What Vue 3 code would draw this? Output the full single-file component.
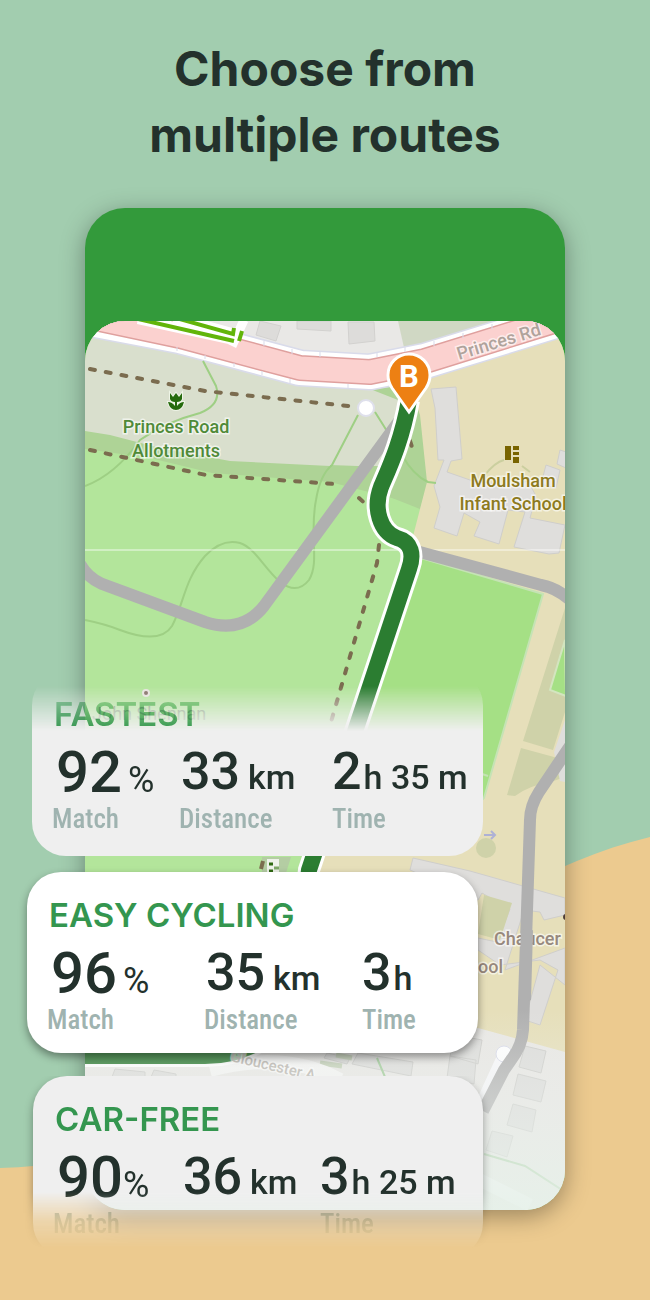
<script setup>
const routes = [
  {
    name: 'FASTEST',
    kind: 'fastest',
    match: '92',
    distance: '33',
    time: ['2', 'h 35 m'],
  },
  {
    name: 'EASY CYCLING',
    kind: 'easy',
    match: '96',
    distance: '35',
    time: ['3', 'h'],
  },
  {
    name: 'CAR-FREE',
    kind: 'carfree',
    match: '90',
    distance: '36',
    time: ['3', 'h 25 m'],
  },
]

const routeLine =
  'M409 400 C402 440 390 466 381 487 C373 508 380 532 397 538 C412 542 414 555 409 569 L309 870 L292 1010 Q260 1056 205 1056 L80 1056'
</script>

<template>
  <main class="poster">
    <svg class="dune" viewBox="0 0 650 1300" preserveAspectRatio="none" aria-hidden="true">
      <path d="M0 1168 C130 1164 220 1120 330 1025 C430 940 530 866 650 837 V1300 H0 Z" fill="#ecca8f" />
    </svg>

    <h1>Choose from<br />multiple routes</h1>

    <div class="stage">
      <section class="phone" aria-label="Map">
        <svg class="map" viewBox="85 321 480 889">
          <defs>
            <linearGradient id="haze" x1="0" y1="0" x2="0" y2="1">
              <stop offset="0" stop-color="#ecefec" stop-opacity="0" />
              <stop offset="0.4" stop-color="#ebefec" stop-opacity="0.4" />
              <stop offset="1" stop-color="#e6f1e9" stop-opacity="0.9" />
            </linearGradient>
          </defs>
          <rect x="85" y="321" width="480" height="889" fill="#b3e59b" />

          <!-- land cover -->
          <path d="M85 321 H565 V400 L400 500 L330 482 L212 473 L150 458 L85 449 Z" fill="#aed396" />
          <path d="M85 321 H430 L400 380 L398 466 H330 L230 461 L160 448 L110 435 L85 431 Z" fill="#d9dfcd" />
          <path d="M396 386 L417 410 L428 482 L420 509 L362 486 L330 482 V465 L385 467 L400 420 Z" fill="#aed396" />
          <path d="M370 389 L392 387 L398 400 Z" fill="#aed396" />
          <path d="M408 380 L565 335 V1210 H300 V870 L412 540 L427 482 L420 415 Z" fill="#e6dfba" />
          <path d="M414 556 L543 594 L484 798 L440 840 L320 850 Z" fill="#a5e085" stroke="#c5e3b5" stroke-width="2" />
          <path d="M482 774 L488 776" stroke="#c5e3b5" stroke-width="2" />
          <path d="M565 608 L523 741 L553 750 L565 712 Z M521 748 L507 795 L515 796 Q530 785 548 783 L562 778 L565 760 Z" fill="#cfd2a9" />
          <path d="M565 640 L550 690 L566 696 Z" fill="#a5e085" stroke="#d3e5bf" stroke-width="2" />
          <path d="M565 720 L554 752 L560 781 L565 782 Z" fill="#dfdedc" />
          <circle cx="486" cy="848" r="10" fill="#cfd2a9" />
          <path d="M262 857 H291 L286 873 H262 Z" fill="#b4cda3" />

          <!-- north side of the road -->
          <path d="M85 321 H565 L425 348 L370 356 L300 352 L237 336 L160 321 Z" fill="#e9e8e6" />
          <path d="M398 321 H540 L405 352 Z" fill="#d0d8c4" />
          <path d="M260 321 L281 326 L276 341 L256 335 Z M297 321 H331 V331 L297 329 Z M348 322 H374 L375 341 L349 344 Z" fill="#dddcda" stroke="#d2d1cf" />
          <g fill="none" stroke-linejoin="round">
            <path d="M85 318 L180 336 L300 368 L370 372 L425 361 L565 318" stroke="#d9dbea" stroke-width="37" />
            <path d="M85 318 L180 336 L300 368 L370 372 L425 361 L565 318" stroke="#ffffff" stroke-width="34" />
            <path d="M85 316 L180 336 L300 368 L370 372 L425 361 L570 316" stroke="#dfa09e" stroke-width="26" />
            <path d="M85 316 L180 336 L300 368 L370 372 L425 361 L570 316" stroke="#fbd1cf" stroke-width="23" />
            <path d="M177 347 V351 M205 355 V359 M234 363 V367 M262 371 V375 M290 379 V383 M264 341 V346 M292 349 V354 M320 352 V357 M377 352 V357 M405 347 V352 M434 341 V346 M463 333 V338 M492 324 V329 M348 384 V388" stroke="#d9dbea" />
          </g>
          <path d="M138 319 L234 340 M174 317 L232 333" stroke="#ffffff" stroke-width="10" fill="none" />
          <path d="M232 346 L244 320" stroke="#ffffff" stroke-width="9" />
          <path d="M138 319 L234 341 M176 318 L233 334 L234 328 M239 341 L242 331" fill="none" stroke="#62b50a" stroke-width="4" />

          <!-- buildings -->
          <g fill="#dfdedc" stroke="#cfcecb">
            <path d="M431 389 L456 387 L462 459 L451 461 L447 472 L470 480 L510 486 L528 481 L536 496 L530 518 L565 525 L559 553 L549 554 L514 547 L525 512 L508 510 L499 544 L474 536 L480 522 L464 513 L457 536 L434 528 L440 507 L434 486 L444 460 L438 460 L435 408 Z" />
            <path d="M546 465 L560 470 L556 488 L541 484 Z M560 450 L566 452 V468 L557 464 Z" />
            <path d="M413 858 L470 871 L565 898 V915 L544 920 L540 912 L524 910 L505 970 L565 948 V985 L540 965 L525 1020 L540 1025 L558 970 L540 960 L500 965 L478 950 V938 L497 942 L510 909 L482 893 L478 900 L410 870 Z" />
          </g>
          <path d="M484 895 L512 903 L500 940 L478 934 Z" fill="#cfd2a9" />

          <!-- residential blocks -->
          <path d="M85 1040 H420 L478 1028 L565 1052 V1210 H85 Z" fill="#e9e8e5" />
          <g fill="#dddddb" stroke="#cdcdca">
            <path d="M450 1056 L476 1060 L474 1084 L447 1078 Z M525 1046 L546 1051 L541 1073 L519 1067 Z M518 1074 L546 1081 L541 1102 L513 1095 Z M513 1104 L536 1110 L532 1132 L507 1125 Z M492 1131 L513 1136 L507 1157 L486 1150 Z M455 1035 L482 1040 L478 1064 L450 1056 Z" />
            <path d="M327 1053 L350 1058 L347 1064 L324 1058 Z M358 1053 L413 1062 L411 1076 L352 1064 Z M115 1069 L145 1072 V1077 H112 Z M154 1070 L176 1074 V1077 H151 Z" />
          </g>
          <path d="M484 1154 L525 1166 L565 1192 M377 1058 L385 1077" fill="none" stroke="#9fcb98" stroke-width="2" />
          <path d="M320 1063 L342 1066 M336 1055 L352 1058" stroke="#c2cfb6" stroke-width="5" />
          <path d="M480 1180 L530 1205 M503 1058 L480 1108" stroke="#f8f8fb" stroke-width="13" />
          <circle cx="504" cy="1054" r="8" fill="#ffffff" stroke="#d9dbea" />
          <path d="M210 1070 Q285 1050 340 1080" fill="none" stroke="#f5f5f4" stroke-width="14" />

          <!-- thin contour paths -->
          <g fill="none" stroke="#9ecf84" stroke-width="2">
            <path d="M203 361 L216 386 Q222 404 200 413 Q165 422 140 440 Q115 475 85 486" />
            <path d="M85 620 Q105 624 120 630 Q160 645 172 626 C184 604 184 580 205 556 Q222 538 240 543 C255 548 264 568 280 582 Q297 595 309 580 C320 562 309 535 316 500 Q320 475 332 465 L358 415 M375 412 L402 455 Q413 475 428 482 L436 483" />
            <path d="M484 476 Q495 462 504 460 M522 466 L530 472" stroke="#cbcf9f" />
          </g>
          <path d="M85 550 H565" stroke="#ffffff" stroke-opacity="0.4" stroke-width="2" />

          <!-- footpaths -->
          <g fill="none" stroke="#7b6c4f" stroke-width="4" stroke-dasharray="5 11" stroke-linecap="round">
            <path d="M90 369 L205 391 L358 407" />
            <path d="M90 450 L206 475 L335 484 M359 498 L370 508" />
            <path d="M379 545 L377 563 L331 722 M410 441 L412 447" />
          </g>
          <circle cx="366" cy="408" r="8" fill="#ffffff" stroke="#dfe0ec" stroke-width="2" />
          <path d="M263 861 L261 869" stroke="#7b6c4f" stroke-width="4" />
          <path d="M267 859 H279 V873 H267 Z" fill="#eef2ea" />
          <path d="M269 864 H273 M269 871 H273" stroke="#2f6a13" stroke-width="3" />
          <path d="M274 868 H279" stroke="#7fa868" stroke-width="3" />

          <!-- alternative routes -->
          <g fill="none" stroke="#b0b0b0" stroke-width="12">
            <path d="M80 564 Q88 578 102 584 L205 622 Q242 634 264 606 L410 406" />
            <path d="M416 551 L541 585 Q557 588 570 600" />
            <path d="M570 746 L539 792 Q530 806 530 820 L523 1030 Q522 1046 511 1060 L504 1070 L483 1111" />
          </g>

          <!-- selected route -->
          <path :d="routeLine" fill="none" stroke="#ffffff" stroke-width="22" />
          <path :d="routeLine" fill="none" stroke="#2b7d31" stroke-width="16" />

          <!-- labels -->
          <g class="place">
            <g class="allotments">
              <text x="176" y="433">Princes Road</text>
              <text x="176" y="457">Allotments</text>
            </g>
            <g class="school">
              <text x="513" y="487">Moulsham</text>
              <text x="513" y="510">Infant School</text>
            </g>
            <text class="street" x="459" y="360" transform="rotate(-17 459 360)">Princes Rd</text>
            <text class="person" x="92" y="720">John Shennan</text>
            <g class="chaucer">
              <text x="494" y="945">Chaucer</text>
              <text x="478" y="973">ool</text>
            </g>
            <text class="gloucester" x="230" y="1061" transform="rotate(13 230 1061)">Gloucester A</text>
          </g>
          <path d="M527 930 L525 1000" stroke="#b0b0b0" stroke-width="12" />
          <circle cx="566" cy="917" r="3" fill="#4d3c38" />
          <circle cx="146" cy="693" r="3" fill="#826a63" stroke="#e8e4df" stroke-width="2" />
          <path d="M170 393 L173 397 L176 393 L179 397 L182 393 V399 Q181 402 177 402 V406 Q180 402 184 402 Q182 410 176 410 Q170 410 168 402 Q172 402 175 406 V402 Q171 402 170 399 Z" fill="#256a0d" stroke="#eef4e6" stroke-width="2" paint-order="stroke" />
          <path d="M505 446 H511 V460 H505 Z M513 446 H519 V450 H513 Z M513 452 H519 V455 H513 Z M513 457 H519 V463 H513 Z" fill="#796400" />
          <path d="M484 835 H494 M491 831 L495 835 L491 839" fill="none" stroke="#aeb1d5" stroke-width="2" />

          <!-- destination pin -->
          <path d="M409 412 L392 388 Q388 382 388 375 A21 21 0 0 1 430 375 Q430 382 426 388 Z" fill="#ed8013" stroke="#ffffff" stroke-width="3" />
          <text class="pin" x="409" y="387">B</text>

          <rect x="85" y="1010" width="480" height="200" fill="url(#haze)" />
        </svg>
      </section>

      <ul class="routes">
        <li v-for="route in routes" :key="route.kind" :class="route.kind">
          <article class="card">
            <h2>{{ route.name }}</h2>
            <dl>
              <div>
                <dd><b class="score">{{ route.match }}</b><span class="percent">%</span></dd>
                <dt>Match</dt>
              </div>
              <div>
                <dd><b class="length">{{ route.distance }}</b><span class="km">km</span></dd>
                <dt v-if="route.kind !== 'carfree'">Distance</dt>
              </div>
              <div>
                <dd><b>{{ route.time[0] }}</b><span class="duration">{{ route.time[1] }}</span></dd>
                <dt>Time</dt>
              </div>
            </dl>
          </article>
        </li>
      </ul>
    </div>
  </main>
</template>

<style>
body {
  background: #ecca8f;
}
</style>

<style scoped>
.poster {
  position: relative;
  box-sizing: border-box;
  min-height: 100vh;
  padding: 36px 0 0;
  overflow: hidden;
  background: #a2cdaf;
  font-family: Roboto, 'Liberation Sans', sans-serif;
}

.dune {
  position: absolute;
  inset: 0;
  width: 100%;
  height: 100%;
}

h1 {
  position: relative;
  margin: 0 0 40px;
  color: #23312c;
  font: 700 48px/66px Inter, 'Open Sans', sans-serif;
  text-align: center;
}

.stage {
  position: relative;
  display: grid;
}

.phone,
.routes {
  grid-area: 1 / 1;
}

.phone {
  align-self: start;
  margin: 0 85px;
  padding-top: 113px;
  border-radius: 40px;
  background: #339a3b;
  box-shadow: 0 6px 24px rgba(0, 0, 0, 0.35);
}

.map {
  display: block;
  width: 100%;
  height: auto;
  border-radius: 40px;
}

.place {
  font-family: Roboto, 'Liberation Sans', sans-serif;
  font-size: 18px;
  font-weight: 500;
  paint-order: stroke;
  stroke: rgba(255, 255, 255, 0.6);
  stroke-width: 3px;
}

.allotments {
  fill: #4f8a38;
  text-anchor: middle;
}

.school {
  fill: #8d7a20;
  text-anchor: middle;
}

.street {
  fill: #b0a39c;
}

.person {
  fill: #7c9a72;
  stroke: none;
  font-weight: 400;
}

.chaucer {
  fill: #97887d;
}

.gloucester {
  fill: #bab6b0;
  font-size: 15px;
}

.pin {
  fill: #ffffff;
  font: 700 31px Roboto, sans-serif;
  text-anchor: middle;
}

.routes {
  position: relative;
  width: 499px;
  max-width: 100%;
  margin: 0;
  padding: 463px 0 0;
  list-style: none;
}

li {
  padding: 0 16px 16px;
}

.fastest {
  margin-left: 16px;
  mask-image: linear-gradient(transparent 15px, #000 60px);
}

.easy {
  position: relative;
  margin-left: 11px;
}

.carfree {
  margin: 7px 0 0 17px;
  mask-image: linear-gradient(#000 116px, rgba(0, 0, 0, 0.3) 145px, transparent 172px);
}

.card {
  box-sizing: border-box;
  width: 451px;
  max-width: 100%;
  padding: 18px 0 17px 20px;
  border-radius: 34px;
  background: #efefef;
}

.fastest .card {
  padding-bottom: 21px;
}

.easy .card {
  background: #ffffff;
  box-shadow: 0 4px 8px rgba(0, 0, 0, 0.4);
}

.carfree .card {
  box-shadow: 0 4px 8px rgba(0, 0, 0, 0.35);
}

h2 {
  margin: 0;
  padding-left: 2px;
  color: #34964f;
  font: 600 33px/50px Inter, 'Open Sans', sans-serif;
}

dl {
  display: grid;
  grid-template-columns: 127px 153px auto;
  margin: 0;
}

.easy dl {
  grid-template-columns: 157px 158px auto;
}

.carfree dl {
  grid-template-columns: 130px 137px auto;
}

dl div {
  display: flex;
  flex-direction: column;
}

dd {
  display: flex;
  align-items: baseline;
  height: 64px;
  margin: 0;
  color: #23312c;
  line-height: 66px;
  white-space: nowrap;
}

b {
  font-size: 52px;
  font-weight: 500;
}

.score {
  padding-left: 4px;
  font-size: 58px;
}

.length {
  padding-left: 2px;
}

.carfree .length {
  padding-left: 0;
}

dd span {
  font-size: 34px;
}

dd .percent {
  margin-left: 6px;
  font-size: 36px;
  font-weight: 400;
}

.carfree .percent {
  margin-left: 0;
}

.km {
  margin-left: 8px;
  font-weight: 500;
}

.duration {
  margin-left: 2px;
  font-weight: 500;
}

dt {
  color: #9fb3b0;
  font: 500 27px/32px 'Roboto Condensed', 'Liberation Sans Narrow', Roboto, sans-serif;
}
</style>
